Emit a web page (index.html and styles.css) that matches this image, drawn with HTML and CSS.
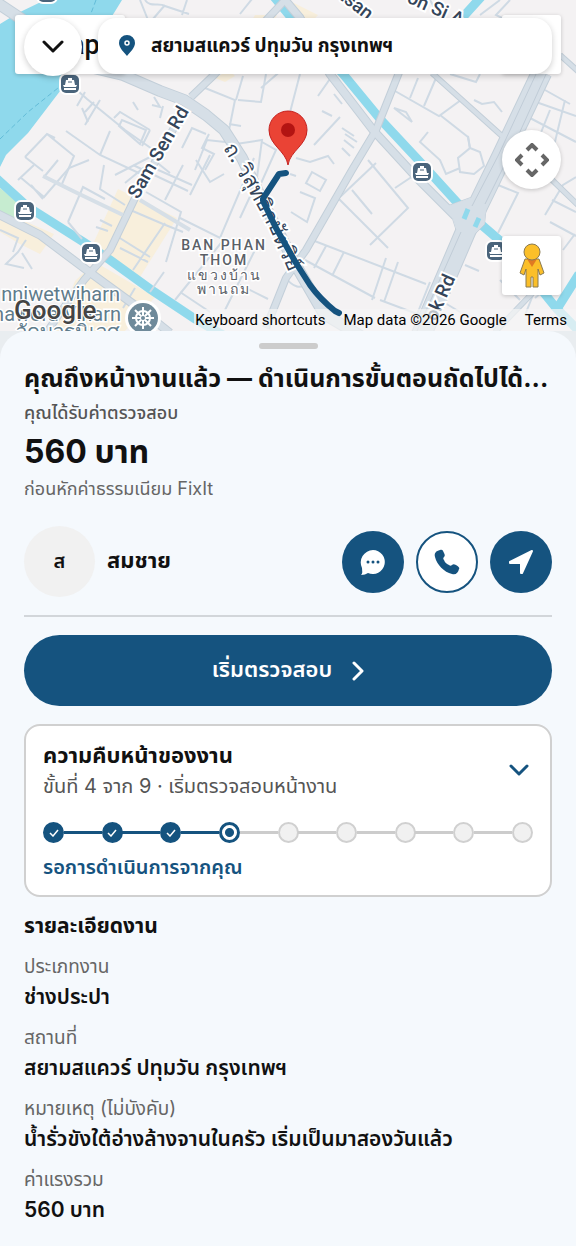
FILE: index.html
```html
<!DOCTYPE html>
<html lang="th">
<head>
    <meta charset="UTF-8">
    <meta name="viewport" content="width=device-width, initial-scale=1.0">
    <title>FixIt</title>
    <link rel="stylesheet" href="styles.css">
</head>
<body>

<section class="map">
    <svg class="map-canvas" viewBox="0 0 576 331" preserveAspectRatio="xMidYMid slice" aria-hidden="true">
        <defs>
            <g id="pier">
                <rect x="-11" y="-11" width="22" height="22" rx="7" fill="#fff"/>
                <rect x="-9" y="-9" width="18" height="18" rx="5" fill="#4a647b"/>
                <path d="M-2 -6h4v2h2l1 5h2l-1 2h-12l-1-2h2l1-5h2zM-6 4h12v2h-12z" fill="#fff"/>
                <path d="M-2 -2h4" stroke="#4a647b"/>
            </g>
        </defs>
        <rect width="576" height="331" fill="#f4f2f3"/>

        <!-- blocos comerciais -->
        <g fill="#f8efdc">
            <path d="M118 189l59 29-37 59-52-22z"/>
            <path d="M95 262l60 35-30 34H55l20-50z"/>
            <path d="M0 218l22 2 32 14-14 20-20-10-20-12z"/>
            <path d="M255 15h22l-8 14h-22zM288 0l30 15-13 14-17-12z"/>
            <path d="M215 78l14-8 6 6-10 6z"/>
        </g>
        <path d="M0 188l22 18-4 13-18-5z" fill="#c6ecd0"/>

        <!-- rio e canais -->
        <path d="M0 24l18-11L45 0h77l-8 13-44 65-42 55-22 22-6 12z" fill="#8fd9ec"/>
        <path d="M0 139L28 112l30-24M96 0l-6 16" fill="none" stroke="#63bcd8" stroke-dasharray="5 3"/>
        <g fill="none" stroke="#8fd9ec" stroke-width="9">
            <path d="M-4 178l32 29 57 36 25 17 40 29 45 30 35 20"/>
            <path d="M270-8l20 24 53 58 38 46 42 45 40 44 42 36 52 64 24 24"/>
            <path d="M463 17L482-4M555 312l24-38"/>
        </g>

        <!-- ruas pequenas -->
        <g fill="none" stroke="#cfdae4" stroke-width="2">
            <path d="M70 84l17 15 38 31 40 28M66 131l34 24 43 20M47 134l27 22-12 28M25 157l22-23 8 4M85 125l15-25M100 155l10-24M25 157l18 14"/>
            <path d="M154 97l6 10-8-2M160 118l3-12M138 110l-5-8M114 118l6-6 30 18M119 126l21 18 6-14-24-10z"/>
            <path d="M77 106l8-14M85 112l9-10M88 122l-6-14M150 130l-8 16M182 148l10-20 14 6M195 170l12-30 18 2"/>
            <path d="M205 88l30 12-6 30M243 76l-7 24M238 100l23 2 5-28M261 88l30-26M288 120l12-46M229 124l12 2M205 170l9-16-12-6 7-14"/>
            <path d="M236 144l26-4-8 60M262 142l14 8-18 40M296 158l14 4 18-6 6 8M290 174l6 2"/>
            <path d="M18 180l16-15M20 177l24 20 25-29 20-8M44 177l14-17M31 185l12 14M104 165l-4 24 25 16M68 222l15-35 22 12M68 222l14 17"/>
            <path d="M115 175l35-18 20 16M125 183l22-18 45 20M133 165l55 26M190 195l20-40M165 200l18-35M196 160l14 22 14-8"/>
            <path d="M128 209l35 15 20 8M146 192l35 20-15 50M165 223l-32 47M115 235l35 22M120 248l28 14M96 227l12 4M100 220l12 6"/>
            <path d="M0 230l18 8-5 14M26 240l-8 12-12 12 18 4M22 253l10 16M135 288l-12 20M150 292l14-20M175 300l50-62M180 292l30 20"/>
            <path d="M180 218l40 20 34-80M240 218l14-30M240 285l28 14M225 310l30-60M284 276q14 18 24 6"/>
            <path d="M140 0l8 20M145 0c5 8 14 2 20 6l24 8M165 5l-12 14M187 0l-5 15M240 14l12-15M430 0l8 14M500 0l-20 15M510 0l-14 15 12 6"/>
            <path d="M318 96l14-20M322 111l10 5M334 94l8 10M340 117l-26 28M342 128l12 8M345 134l12 8M344 140l10 8M342 148l8 8"/>
            <path d="M395 91l44 25 22-16M394 108l18 14-6-10zM440 115l28 22 2 12M410 98l8-20M424 106l12-28"/>
            <path d="M428 132l-8 10 20 18 6 14 14-6M468 136l2 12-12 10 2 14 14 2 10-8-4-14-10-4M474 100l8 4 12-2 8 10"/>
            <path d="M450 74l26 8 4-8M545 90l25 14M536 102l40 14M550 110l-12 30M530 118l46 24M565 100l-12 50"/>
            <path d="M312 172l14 8-6 11-14-8zM300 192l15 6-8 24-16-10M338 198l50 50M340 197l36-34M370 245l38-37-40-48M352 190l20 24"/>
            <path d="M395 188l18-12M312 240l114 44M305 260l70 38M326 246l-12 22M344 252l-12 24M386 258l-14 42M398 262l-14 40M430 282l-14 35M380 300l40 15"/>
            <path d="M498 185l20 8-20 40M465 265l14 6M545 215l18-30 13-8M550 222l26 14M563 250l12-16M552 200l24 12"/>
            <path d="M525 315l12-30M535 298l22-18M440 300l20 12M500 280l20 20"/>
        </g>

        <!-- ruas principais -->
        <g fill="none" stroke="#c3cfd9" stroke-linejoin="round">
            <path d="M185 108l-50 90-25 52-26 30-22 30-17 25" stroke-width="8"/>
            <path d="M-4 213l44 22 48 36 52 38 30 24" stroke-width="9"/>
            <path d="M-4 2l36 24 45 38 46 11 37 16 24 9 22 15 18 15 18 28 22 46 30 58 30 52 40 24" stroke-width="12"/>
            <path d="M191 97l24-23 40-42L288-3" stroke-width="8"/>
            <path d="M280-6l20 24 30 56 43 56 44 48 38 38" stroke-width="9"/>
            <path d="M400 70l-24 60-24 40-46 80-20 28-20 50" stroke-width="8"/>
            <path d="M432 73l70 63M560 55l20 18M546 174l34 33M545 280l-50 52" stroke-width="6"/>
            <path d="M542 72l-40 84-34 70-48 112" stroke-width="21"/>
            <path d="M449 206l22-8 15 6-2 20-16 16-12-12z" stroke-width="2"/>
        </g>
        <g fill="none" stroke="#d6dfe7" stroke-linejoin="round">
            <path d="M43 176l30 15 50 24M140 200l50 30" stroke-width="4"/>
            <path d="M185 108l-50 90-25 52-26 30-22 30-17 25" stroke-width="6"/>
            <path d="M-4 213l44 22 48 36 52 38 30 24" stroke-width="7"/>
            <path d="M-4 2l36 24 45 38 46 11 37 16 24 9 22 15 18 15 18 28 22 46 30 58 30 52 40 24" stroke-width="10"/>
            <path d="M191 97l24-23 40-42L288-3" stroke-width="6"/>
            <path d="M280-6l20 24 30 56 43 56 44 48 38 38" stroke-width="7"/>
            <path d="M400 70l-24 60-24 40-46 80-20 28-20 50" stroke-width="6"/>
            <path d="M432 73l70 63M560 55l20 18M546 174l34 33M545 280l-50 52" stroke-width="4"/>
            <path d="M542 72l-40 84-34 70-48 112" stroke-width="19"/>
            <path d="M449 206l22-8 15 6-2 20-16 16-12-12z" fill="#d6dfe7"/>
        </g>
        <path d="M537 72l-39 84-26 50M547 72l-38 84-24 48M461 232l-44 99" fill="none" stroke="#c0ccd7"/>
        <path d="M464 219l4-10M475 227l4-9" stroke="#8fd9ec" stroke-width="5"/>

        <use href="#pier" x="47" y="-7"/>
        <use href="#pier" x="70" y="84"/>
        <use href="#pier" x="25" y="211"/>
        <use href="#pier" x="91" y="253"/>
        <use href="#pier" x="422" y="172"/>
        <use href="#pier" x="496" y="251"/>

        <g class="road-name">
            <text transform="translate(138 200) rotate(-60)">Sam Sen Rd</text>
            <text transform="translate(436 322) rotate(-66)">ok Rd</text>
            <text transform="translate(338 -2) rotate(38)">tsan</text>
            <text transform="translate(406 2) rotate(24)">on Si A</text>
            <path id="wisut" d="M223 148l23 38 22 40 18 40 22 50" fill="none" stroke="none"/>
            <text><textPath class="thai-road" href="#wisut">ถ. วิสุทธิกษัตริย์</textPath></text>
        </g>
        <g class="district" text-anchor="middle">
            <text x="224" y="250">BAN PHAN</text>
            <text x="224" y="265">THOM</text>
            <text x="224" y="280">แขวงบ้าน</text>
            <text x="224" y="294">พานถม</text>
        </g>
        <g class="temple">
            <text x="120" y="301" text-anchor="end">nniwetwiharn</text>
            <text x="121" y="321" text-anchor="end">nawora Viharn</text>
            <text x="120" y="339" text-anchor="end">วัดบวรนิเวศ</text>
        </g>
        <g transform="translate(143 318)">
            <circle r="18" fill="#fff"/>
            <circle r="15" fill="#6f8a9a"/>
            <circle r="7" fill="none" stroke="#fff" stroke-width="2"/>
            <path d="M0-11v22M-11 0h22M-8-8L8 8M8-8L-8 8" stroke="#fff" stroke-width="2"/>
            <circle r="2" fill="#6f8a9a"/>
        </g>

        <rect x="194" y="309" width="382" height="22" fill="#f5f5f5" fill-opacity=".7"/>
        <path d="M286 173l-7 1-15 23q-2 3 0 6l12 25 20 35 14 22q10 14 25 26l4 2" fill="none" stroke="#15537f" stroke-width="6" stroke-linecap="round" stroke-linejoin="round"/>
        <path d="M288 165c-2-14-19-20-19-35a19 19 0 0 1 38 0c0 15-17 21-19 35z" fill="#ea4335" stroke="#c5221f"/>
        <circle cx="288" cy="130" r="7" fill="#b31412"/>
        <text class="google" x="14" y="319">Google</text>
    </svg>

    <button class="map-type" type="button">Map</button>
    <button class="map-full" type="button" aria-label="Toggle fullscreen view"></button>
    <button class="map-pan" type="button" aria-label="Map camera controls">
        <svg viewBox="0 0 34 34" width="34" height="34" fill="none" stroke="#666" stroke-width="4">
            <path d="M12 7l5-5 5 5M12 27l5 5 5-5M7 12l-5 5 5 5M27 12l5 5-5 5"/>
        </svg>
    </button>
    <button class="map-pegman" type="button" aria-label="Street View">
        <svg viewBox="0 0 26 46" width="26" height="46" stroke="#8a7a50" fill="#fbbf29">
            <path d="M6 16h14l5 14-4 2-2-6v18h-5V34h-2v10H7V26l-2 6-4-2z"/>
            <path d="M8 16h10l-5 8z" fill="#e07a22" stroke="none"/>
            <circle cx="13" cy="9" r="8"/>
        </svg>
    </button>

    <div class="top-bar">
        <button class="back" type="button" aria-label="ย่อ">
            <svg viewBox="0 0 24 14" width="24" height="14" fill="none" stroke="#111" stroke-width="3" stroke-linecap="round" stroke-linejoin="round"><path d="M3 2l9 9 9-9"/></svg>
        </button>
        <div class="place">
            <svg viewBox="0 0 16 22" width="16" height="22"><path d="M8 0a8 8 0 0 0-8 8c0 5 5 9 8 13 3-4 8-8 8-13a8 8 0 0 0-8-8z" fill="#15537f"/><circle cx="8" cy="8" r="2" fill="#15537f" stroke="#fff" stroke-width="1.5"/></svg>
            <span>สยามสแควร์ ปทุมวัน กรุงเทพฯ</span>
        </div>
    </div>

    <div class="map-credits">
        <button type="button">Keyboard shortcuts</button>
        <span>Map data ©2026 Google</span>
        <a href="#">Terms</a>
    </div>
</section>

<main class="sheet">
    <div class="handle"></div>

    <h1>คุณถึงหน้างานแล้ว — ดำเนินการขั้นตอนถัดไปได้...</h1>
    <p class="fee-label">คุณได้รับค่าตรวจสอบ</p>
    <p class="fee">560 บาท</p>
    <p class="fee-note">ก่อนหักค่าธรรมเนียม FixIt</p>

    <div class="customer">
        <div class="avatar">ส</div>
        <div class="name">สมชาย</div>
        <button class="round" type="button" aria-label="แชท">
            <svg viewBox="0 0 26 26" width="26" height="26"><path d="M13 1a12 12 0 1 1-5 23c-2 1-4 2-7 2 2-2 1-4 1-7A12.500 12.500 0 0 1 13 1z" fill="#fff"/><g fill="#15537f"><circle cx="8" cy="13" r="1.500"/><circle cx="13" cy="13" r="1.500"/><circle cx="18" cy="13" r="1.500"/></g></svg>
        </button>
        <button class="round outline" type="button" aria-label="โทร">
            <svg viewBox="0 0 26 26" width="26" height="26"><path d="M6 1c2-1 3 0 4 3 1 2 1 3 0 4-1 1-1 2 0 3 1 3 3 4 5 5 1 1 2 1 3 0 1-1 2-1 4 0 3 2 4 3 3 4-1 4-3 6-7 5C10 23 3 16 1 8 0 4 2 2 6 1z" fill="#15537f"/></svg>
        </button>
        <button class="round" type="button" aria-label="นำทาง">
            <svg viewBox="0 0 26 26" width="26" height="26"><path d="M24 2L14 24h-1V14H2v-1z" fill="#fff" stroke="#fff" stroke-width="2" stroke-linejoin="round"/></svg>
        </button>
    </div>

    <button class="start" type="button">
        เริ่มตรวจสอบ
        <svg viewBox="0 0 12 20" width="12" height="20" fill="none" stroke="#fff" stroke-width="3" stroke-linecap="round" stroke-linejoin="round"><path d="M2 2l8 8-8 8"/></svg>
    </button>

    <section class="progress">
        <div class="progress-head">
            <div>
                <h2>ความคืบหน้าของงาน</h2>
                <p>ขั้นที่ 4 จาก 9 · เริ่มตรวจสอบหน้างาน</p>
            </div>
            <button type="button" aria-label="ขยาย">
                <svg viewBox="0 0 20 12" width="20" height="12" fill="none" stroke="#15537f" stroke-width="3" stroke-linecap="round" stroke-linejoin="round"><path d="M2 2l8 8 8-8"/></svg>
            </button>
        </div>
        <ol class="steps">
            <li class="done"><svg viewBox="0 0 10 8" width="10" height="8"><path d="M1 4l3 3 5-6"/></svg></li>
            <li class="done"><svg viewBox="0 0 10 8" width="10" height="8"><path d="M1 4l3 3 5-6"/></svg></li>
            <li class="done"><svg viewBox="0 0 10 8" width="10" height="8"><path d="M1 4l3 3 5-6"/></svg></li>
            <li class="current"></li>
            <li></li>
            <li></li>
            <li></li>
            <li></li>
            <li></li>
        </ol>
        <p class="waiting">รอการดำเนินการจากคุณ</p>
    </section>

    <section class="details">
        <h2>รายละเอียดงาน</h2>
        <dl>
            <dt>ประเภทงาน</dt>
            <dd>ช่างประปา</dd>
            <dt>สถานที่</dt>
            <dd>สยามสแควร์ ปทุมวัน กรุงเทพฯ</dd>
            <dt>หมายเหตุ (ไม่บังคับ)</dt>
            <dd>น้ำรั่วขังใต้อ่างล้างจานในครัว เริ่มเป็นมาสองวันแล้ว</dd>
            <dt>ค่าแรงรวม</dt>
            <dd>560 บาท</dd>
        </dl>
    </section>
</main>

</body>
</html>
```
FILE: styles.css
```css
* {
    box-sizing: border-box;
}
body {
    margin: 0;
    background-color: #e9edf0;
    color: #111;
    font-family: Inter, "Noto Sans Thai", "Noto Sans", sans-serif;
}
h1, h2, p, dl, dd, ol {
    margin: 0;
    padding: 0;
}
button {
    padding: 0;
    border: none;
    font-family: inherit;
    color: inherit;
    cursor: pointer;
}

/* mapa */
.map {
    position: relative;
    height: 331px;
    overflow: hidden;
}
.map-canvas {
    display: block;
    width: 100%;
    height: 100%;
}
.road-name {
    font: 500 19px Roboto, sans-serif;
    fill: #34455a;
    stroke: #fff;
    stroke-width: 4px;
    paint-order: stroke;
}
.thai-road {
    font-size: 21px;
}
.district {
    font: 500 14px Roboto, sans-serif;
    letter-spacing: 2px;
    fill: #5a6067;
    stroke: #fff;
    stroke-width: 3px;
    paint-order: stroke;
}
.temple {
    font: 20px Roboto, sans-serif;
    fill: #5f7c8c;
    stroke: #fff;
    stroke-width: 3px;
    paint-order: stroke;
}
.google {
    font: 500 26px Roboto, sans-serif;
    fill: #444;
    stroke: #fff;
    stroke-width: 2px;
    paint-order: stroke;
}
.map-type, .map-full, .map-pan, .map-pegman {
    position: absolute;
    background-color: #fff;
    box-shadow: 0 1px 4px rgba(0, 0, 0, 0.2);
}
.map-type {
    top: 15px;
    left: 15px;
    width: 110px;
    height: 59px;
    padding-left: 6px;
    border-radius: 3px;
    font: 500 27px Roboto, sans-serif;
}
.map-full {
    top: 15px;
    right: 15px;
    width: 59px;
    height: 59px;
    border-radius: 3px;
}
.map-pan {
    top: 130px;
    right: 15px;
    width: 59px;
    height: 59px;
    border-radius: 50%;
}
.map-pegman {
    top: 236px;
    right: 15px;
    width: 59px;
    height: 59px;
    border-radius: 3px;
}
.map-pan svg, .map-pegman svg, .back svg, .round svg {
    display: block;
    margin: 0 auto;
}
.top-bar {
    position: absolute;
    top: 18px;
    left: 24px;
    right: 24px;
    display: flex;
    gap: 16px;
}
.back {
    width: 58px;
    height: 58px;
    border-radius: 50%;
    background-color: #fff;
    box-shadow: 0 2px 6px rgba(0, 0, 0, 0.2);
}
.place {
    flex: 1;
    display: flex;
    align-items: center;
    gap: 16px;
    height: 56px;
    padding: 0 21px;
    border-radius: 18px;
    background-color: #fff;
    box-shadow: 0 2px 6px rgba(0, 0, 0, 0.2);
    font-size: 19px;
    font-weight: 700;
}
.map-credits {
    position: absolute;
    right: 9px;
    bottom: 0;
    display: flex;
    gap: 18px;
    font: 15px/22px Roboto, sans-serif;
    color: #000;
}
.map-credits button {
    background: none;
    font: inherit;
}
.map-credits a {
    color: inherit;
    text-decoration: none;
}

/* painel */
.sheet {
    padding: 12px 24px;
    border-radius: 28px 28px 0 0;
    background-color: #f5f9fd;
}
.handle {
    width: 59px;
    height: 6px;
    margin: 0 auto;
    border-radius: 3px;
    background-color: #ccc;
}
h1 {
    margin-top: 9px;
    font-size: 25px;
    line-height: 40px;
    font-weight: 700;
    white-space: nowrap;
    overflow: hidden;
    text-overflow: ellipsis;
}
.fee-label {
    color: #555;
    font-size: 18px;
    line-height: 30px;
    font-weight: 500;
}
.fee {
    font-size: 32px;
    line-height: 48px;
    font-weight: 700;
}
.fee-note {
    color: #666;
    font-size: 18px;
    line-height: 26px;
}
.customer {
    display: flex;
    align-items: center;
    gap: 12px;
    margin-top: 24px;
    padding-bottom: 18px;
    border-bottom: 2px solid #d2d6da;
}
.avatar {
    width: 71px;
    height: 71px;
    border-radius: 50%;
    background-color: #f1f1f1;
    font-size: 20px;
    line-height: 71px;
    font-weight: 600;
    text-align: center;
}
.name {
    flex: 1;
    font-size: 22px;
    font-weight: 700;
}
.round {
    width: 62px;
    height: 62px;
    border-radius: 50%;
    background-color: #15537f;
}
.round.outline {
    border: 2px solid #15537f;
    background-color: #fff;
}
.start {
    display: flex;
    align-items: center;
    justify-content: center;
    gap: 20px;
    width: 100%;
    height: 71px;
    margin-top: 18px;
    border-radius: 36px;
    background-color: #15537f;
    color: #fff;
    font-size: 22px;
    font-weight: 600;
}
.progress {
    margin-top: 18px;
    padding: 14px 17px;
    border: 2px solid #d0d0d0;
    border-radius: 16px;
    background-color: #fff;
}
.progress-head {
    display: flex;
    align-items: center;
    justify-content: space-between;
}
.progress-head button {
    padding: 0 4px;
    background: none;
}
h2 {
    font-size: 21px;
    line-height: 30px;
    font-weight: 700;
}
.progress h2 {
    font-size: 22px;
}
.progress-head p {
    color: #555;
    font-size: 20px;
    line-height: 32px;
}
.steps {
    display: flex;
    justify-content: space-between;
    margin: 20px 0 10px;
    list-style: none;
}
.steps li {
    position: relative;
    width: 21px;
    height: 21px;
    border: 2px solid #d0d0d0;
    border-radius: 50%;
    background-color: #f1f1f1;
}
.steps li + li::before {
    content: "";
    position: absolute;
    top: 7px;
    right: 19px;
    width: 38px;
    height: 3px;
    background-color: #ccc;
}
.steps .done, .steps .current {
    border-color: #15537f;
}
.steps li.done::before, .steps li.current::before {
    background-color: #15537f;
}
.steps .done {
    display: flex;
    align-items: center;
    justify-content: center;
    background-color: #15537f;
}
.steps svg {
    fill: none;
    stroke: #fff;
    stroke-width: 1.5px;
}
.steps .current {
    border-width: 3px;
    background: radial-gradient(circle, #15537f 4px, #fff 5px);
}
.steps li.current::before {
    top: 6px;
    right: 18px;
}
.waiting {
    color: #15537f;
    font-size: 20px;
    line-height: 28px;
    font-weight: 600;
}
.details {
    margin-top: 14px;
}
dl {
    margin-top: 12px;
}
dt {
    color: #666;
    font-size: 19px;
    line-height: 28px;
}
dd {
    margin-bottom: 11px;
    font-size: 21px;
    line-height: 32px;
    font-weight: 600;
}
```
